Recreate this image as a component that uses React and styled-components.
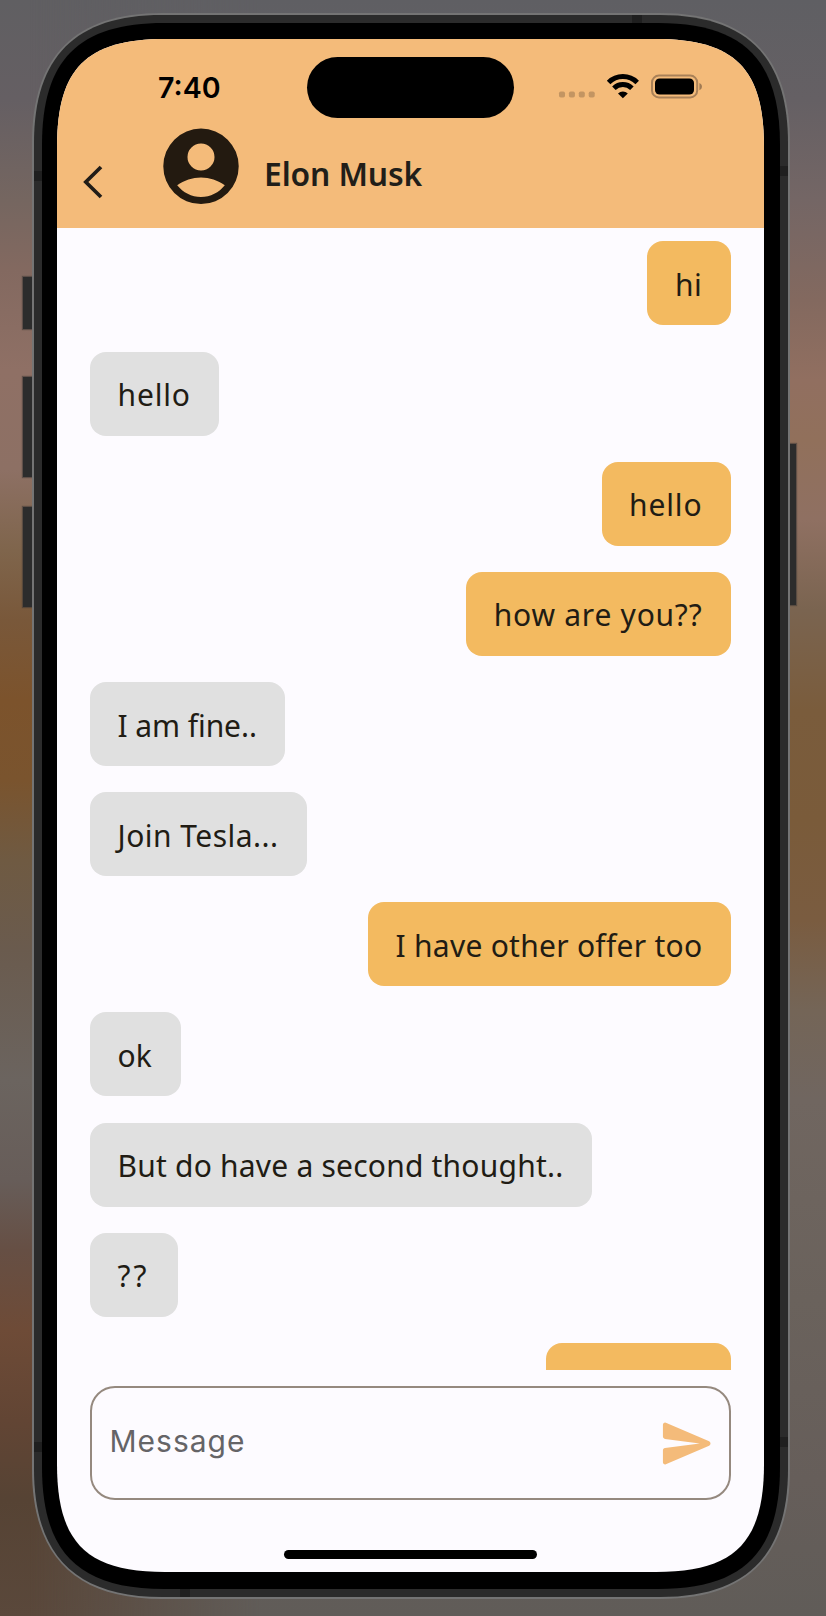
import React from "react";
import styled, { createGlobalStyle } from "styled-components";

const GlobalStyle = createGlobalStyle`
  *, *::before, *::after { box-sizing: border-box; }
  body { margin: 0; background: #625f63; }
`;

const palette = {
  header: "#f4bb7a",
  sent: "#f3ba60",
  received: "#e0e0e0",
  surface: "#fdfbff",
  ink: "#211c14",
};

// Outline of a box with continuous (squircle-like) corners, for clip-path.
const squircle = (w, h, r, c) => {
  const k = r * (1 - c);
  return `path("M0 ${r} C0 ${k} ${k} 0 ${r} 0 L${w - r} 0 C${w - k} 0 ${w} ${k} ${w} ${r} L${w} ${h - r} C${w} ${h - k} ${w - k} ${h} ${w - r} ${h} L${r} ${h} C${k} ${h} 0 ${h - k} 0 ${h - r} Z")`;
};

const Backdrop = styled.div`
  position: relative;
  width: 826px;
  height: 1616px;
  padding: 13px 36px 17px 32px;
  overflow: hidden;
  background: linear-gradient(
    to bottom,
    #605f62 0, #655f63 100px, #756660 200px, #836960 270px, #8f7065 370px,
    #8d7064 470px, #7f654c 550px, #79583a 620px, #7c532c 700px, #7a542e 780px,
    #6f5a42 860px, #6a5b4e 950px, #6b645f 1080px, #675d59 1180px,
    #664f44 1250px, #6e4b37 1330px, #624534 1420px, #564334 1500px, #5a483b 1616px
  );
  &::before {
    content: "";
    position: absolute;
    inset: 0;
    background: linear-gradient(
      to bottom,
      #5f5f63 0, #656064 100px, #746665 200px, #83695f 300px, #916f60 380px,
      #91705b 440px, #8f7062 520px, #7a6450 610px, #7a5c3c 710px,
      #7a5b3a 820px, #7a5c40 920px, #746557 1010px, #706660 1100px,
      #6a625c 1300px, #665e5a 1480px, #605c58 1616px
    );
    mask-image: linear-gradient(to right, transparent 30px, #000 260px);
  }
`;

const Phone = styled.div`
  position: relative;
  width: 758px;
  height: 1586px;
`;

const SideButton = styled.span`
  position: absolute;
  ${(p) => (p.$side === "left" ? "left: -9px;" : "right: -6px;")}
  top: ${(p) => p.$top}px;
  width: 10px;
  height: ${(p) => p.$height}px;
  background: #2c2c2c;
  box-shadow: 0 0 1px 1px rgba(60, 54, 52, 0.55);
`;

const Rim = styled.div`
  position: relative;
  height: 100%;
  padding: 2px;
  background: #747474;
  clip-path: ${squircle(758, 1586, 130, 0.669)};
`;

const Frame = styled.div`
  position: relative;
  height: 100%;
  padding: 8px;
  background: #2b2b2b;
  clip-path: ${squircle(754, 1582, 128, 0.675)};
`;

const AntennaBand = styled.span`
  position: absolute;
  background: #1f1f1f;
  ${(p) => p.$edge}: 0;
  ${(p) =>
    p.$edge === "left" || p.$edge === "right"
      ? `top: ${p.$at}px; width: 8px; height: 10px;`
      : `left: ${p.$at}px; width: 10px; height: 8px;`}
`;

const Bezel = styled.div`
  position: relative;
  height: 100%;
  padding: 16px 16px 17px 15px;
  background: #000;
  clip-path: ${squircle(738, 1566, 122, 0.7)};
`;

const Screen = styled.main`
  display: flex;
  flex-direction: column;
  height: 1533px;
  background: ${palette.surface};
  clip-path: ${squircle(707, 1533, 108, 0.728)};
`;

const Header = styled.header`
  flex: none;
  height: 189px;
  background: ${palette.header};
`;

const StatusBar = styled.div`
  display: grid;
  grid-template-columns: 250px 207px 1fr;
  height: 79px;
  padding-top: 18px;
`;

const Clock = styled.time`
  padding: 12.5px 0 0 101px;
  font: 600 28.6px/35px Inter, sans-serif;
  color: #000;
`;

const Island = styled.div`
  height: 61px;
  border-radius: 31px;
  background: #000;
`;

const StatusIcons = styled.svg`
  display: block;
  margin: 14px 0 0 43px;
`;

const TitleRow = styled.div`
  display: flex;
  height: 110px;
  padding-left: 22px;
`;

const BackButton = styled.button`
  width: 30px;
  height: 40px;
  margin: 44px 52px 0 0;
  padding: 0;
  border: 0;
  background: none;
`;

const Avatar = styled.svg`
  flex: none;
  margin-top: 10px;
`;

const Name = styled.h1`
  margin: 34px 0 0 25px;
  font: 600 31.8px/44px "Noto Sans", sans-serif;
  letter-spacing: -0.1px;
  color: #211e19;
`;

const Messages = styled.section`
  display: flex;
  flex-direction: column;
  gap: 26.17px;
  height: 1142px;
  padding: 13.4px 33px 0;
  overflow: hidden;
`;

const Bubble = styled.div`
  flex: none;
  align-self: ${(p) => (p.$mine ? "flex-end" : "flex-start")};
  height: 84px;
  min-width: ${(p) => p.$minWidth || 0}px;
  padding: 22.6px 28.6px 0 27.5px;
  border-radius: 16px;
  background: ${(p) => (p.$mine ? palette.sent : palette.received)};
  color: ${palette.ink};
  font: 400 30px/41px "Noto Sans", sans-serif;
  letter-spacing: ${(p) => p.$tracking}px;
  white-space: nowrap;
`;

const Composer = styled.div`
  flex: none;
  display: flex;
  align-items: center;
  justify-content: space-between;
  width: 641px;
  height: 114px;
  margin: 16px 0 0 33px;
  padding: 0 12px 0 17.5px;
  border: 2px solid #95897f;
  border-radius: 25px;
`;

const Placeholder = styled.span`
  margin-top: -4px;
  font: 400 30px/36px Inter, sans-serif;
  letter-spacing: 1px;
  color: #656467;
`;

const HomeIndicator = styled.div`
  flex: none;
  align-self: center;
  width: 253px;
  height: 9px;
  margin: 50px 0 0 0;
  border-radius: 5px;
  background: #000;
`;

const messages = [
  { text: "hi", mine: true, tracking: 0.6 },
  { text: "hello", tracking: 0.85 },
  { text: "hello", mine: true, tracking: 0.85 },
  { text: "how are you??", mine: true, tracking: 0.75 },
  { text: "I am fine..", tracking: -0.08 },
  { text: "Join Tesla...", tracking: 0.47 },
  { text: "I have other offer too", mine: true, tracking: 0.27 },
  { text: "ok", tracking: 0.2 },
  { text: "But do have a second thought..", tracking: 0.21 },
  { text: "??", tracking: 3 },
  { text: "", mine: true, tracking: 0, minWidth: 185.5 },
];

const sideButtons = [
  { side: "left", top: 264, height: 52 },
  { side: "left", top: 364, height: 100 },
  { side: "left", top: 494, height: 100 },
  { side: "right", top: 431, height: 161 },
];

const antennaBands = [
  { edge: "top", at: 598 },
  { edge: "bottom", at: 146 },
  { edge: "left", at: 156 },
  { edge: "left", at: 1427 },
  { edge: "right", at: 151 },
  { edge: "right", at: 1422 },
];

function SignalWifiBattery() {
  return (
    <StatusIcons width="150" height="30" viewBox="0 0 150 30" aria-hidden="true">
      <g fill="#c39562">
        {[2, 11.9, 21.8, 31.7].map((x) => (
          <rect key={x} x={x} y="20.5" width="6" height="6" rx="1.8" />
        ))}
      </g>
      <g fill="none" stroke="#000" strokeWidth="5">
        <path d="M51.6 11.400a20.3 20.3 0 0 1 28.600 0" />
        <path d="M56.9 17.300a12.8 12.8 0 0 1 18 0" />
      </g>
      <path d="M65.900 27.300l-4.900-4.800a6.900 6.900 0 0 1 9.800 0z" fill="#000" />
      <rect x="95" y="4.600" width="45.200" height="21.800" rx="7" fill="none" stroke="#a98158" strokeWidth="2" />
      <rect x="98" y="7.400" width="39" height="16.200" rx="4.600" fill="#000" />
      <path d="M142.400 12c3.400 1.400 3.400 5.800 0 7.200z" fill="#a17b53" />
    </StatusIcons>
  );
}

export default function App() {
  return (
    <>
      <GlobalStyle />
      <Backdrop>
        <Phone>
          {sideButtons.map((b) => (
            <SideButton key={b.side + b.top} $side={b.side} $top={b.top} $height={b.height} />
          ))}
          <Rim>
            <Frame>
              {antennaBands.map((b) => (
                <AntennaBand key={b.edge + b.at} $edge={b.edge} $at={b.at} />
              ))}
              <Bezel>
                <Screen>
                  <Header>
                    <StatusBar>
                      <Clock>7:40</Clock>
                      <Island />
                      <SignalWifiBattery />
                    </StatusBar>
                    <TitleRow>
                      <BackButton aria-label="Back">
                        <svg width="30" height="40" viewBox="0 0 30 40" fill="none" stroke="#211d18" strokeWidth="3.7">
                          <path d="M22 5L6.800 20L22 35" />
                        </svg>
                      </BackButton>
                      <Avatar width="78" height="78" viewBox="0 0 78 78" aria-hidden="true">
                        <path
                          fill="#231a10"
                          fillRule="evenodd"
                          d="M40 .6a37.7 37.7 0 1 1 0 75.4a37.7 37.7 0 1 1 0-75.4zM40 15.5a13.5 13.5 0 1 0 0 27a13.5 13.5 0 1 0 0-27zM16.2 57.3C22 64.6 30.5 69 40 69s18-4.4 23.8-11.7C57 52.3 48.5 49.4 40 49.4s-17 2.9-23.8 7.9z"
                        />
                      </Avatar>
                      <Name>Elon Musk</Name>
                    </TitleRow>
                  </Header>
                  <Messages>
                    {messages.map((m, i) => (
                      <Bubble key={i} $mine={m.mine} $tracking={m.tracking} $minWidth={m.minWidth}>
                        {m.text}
                      </Bubble>
                    ))}
                  </Messages>
                  <Composer>
                    <Placeholder>Message</Placeholder>
                    <svg width="59" height="59" viewBox="0 0 24 24" fill="#f4bb7a" aria-hidden="true">
                      <path d="M3.2 20.45l17.6-7.55a1 1 0 0 0 0-1.8L3.2 3.55a.85.85 0 0 0-1.2.8V9.2c0 .5.35.85.85.93L17 12L2.85 13.87c-.5.08-.85.43-.85.93v4.85a.85.85 0 0 0 1.2.8z" />
                    </svg>
                  </Composer>
                  <HomeIndicator />
                </Screen>
              </Bezel>
            </Frame>
          </Rim>
        </Phone>
      </Backdrop>
    </>
  );
}
